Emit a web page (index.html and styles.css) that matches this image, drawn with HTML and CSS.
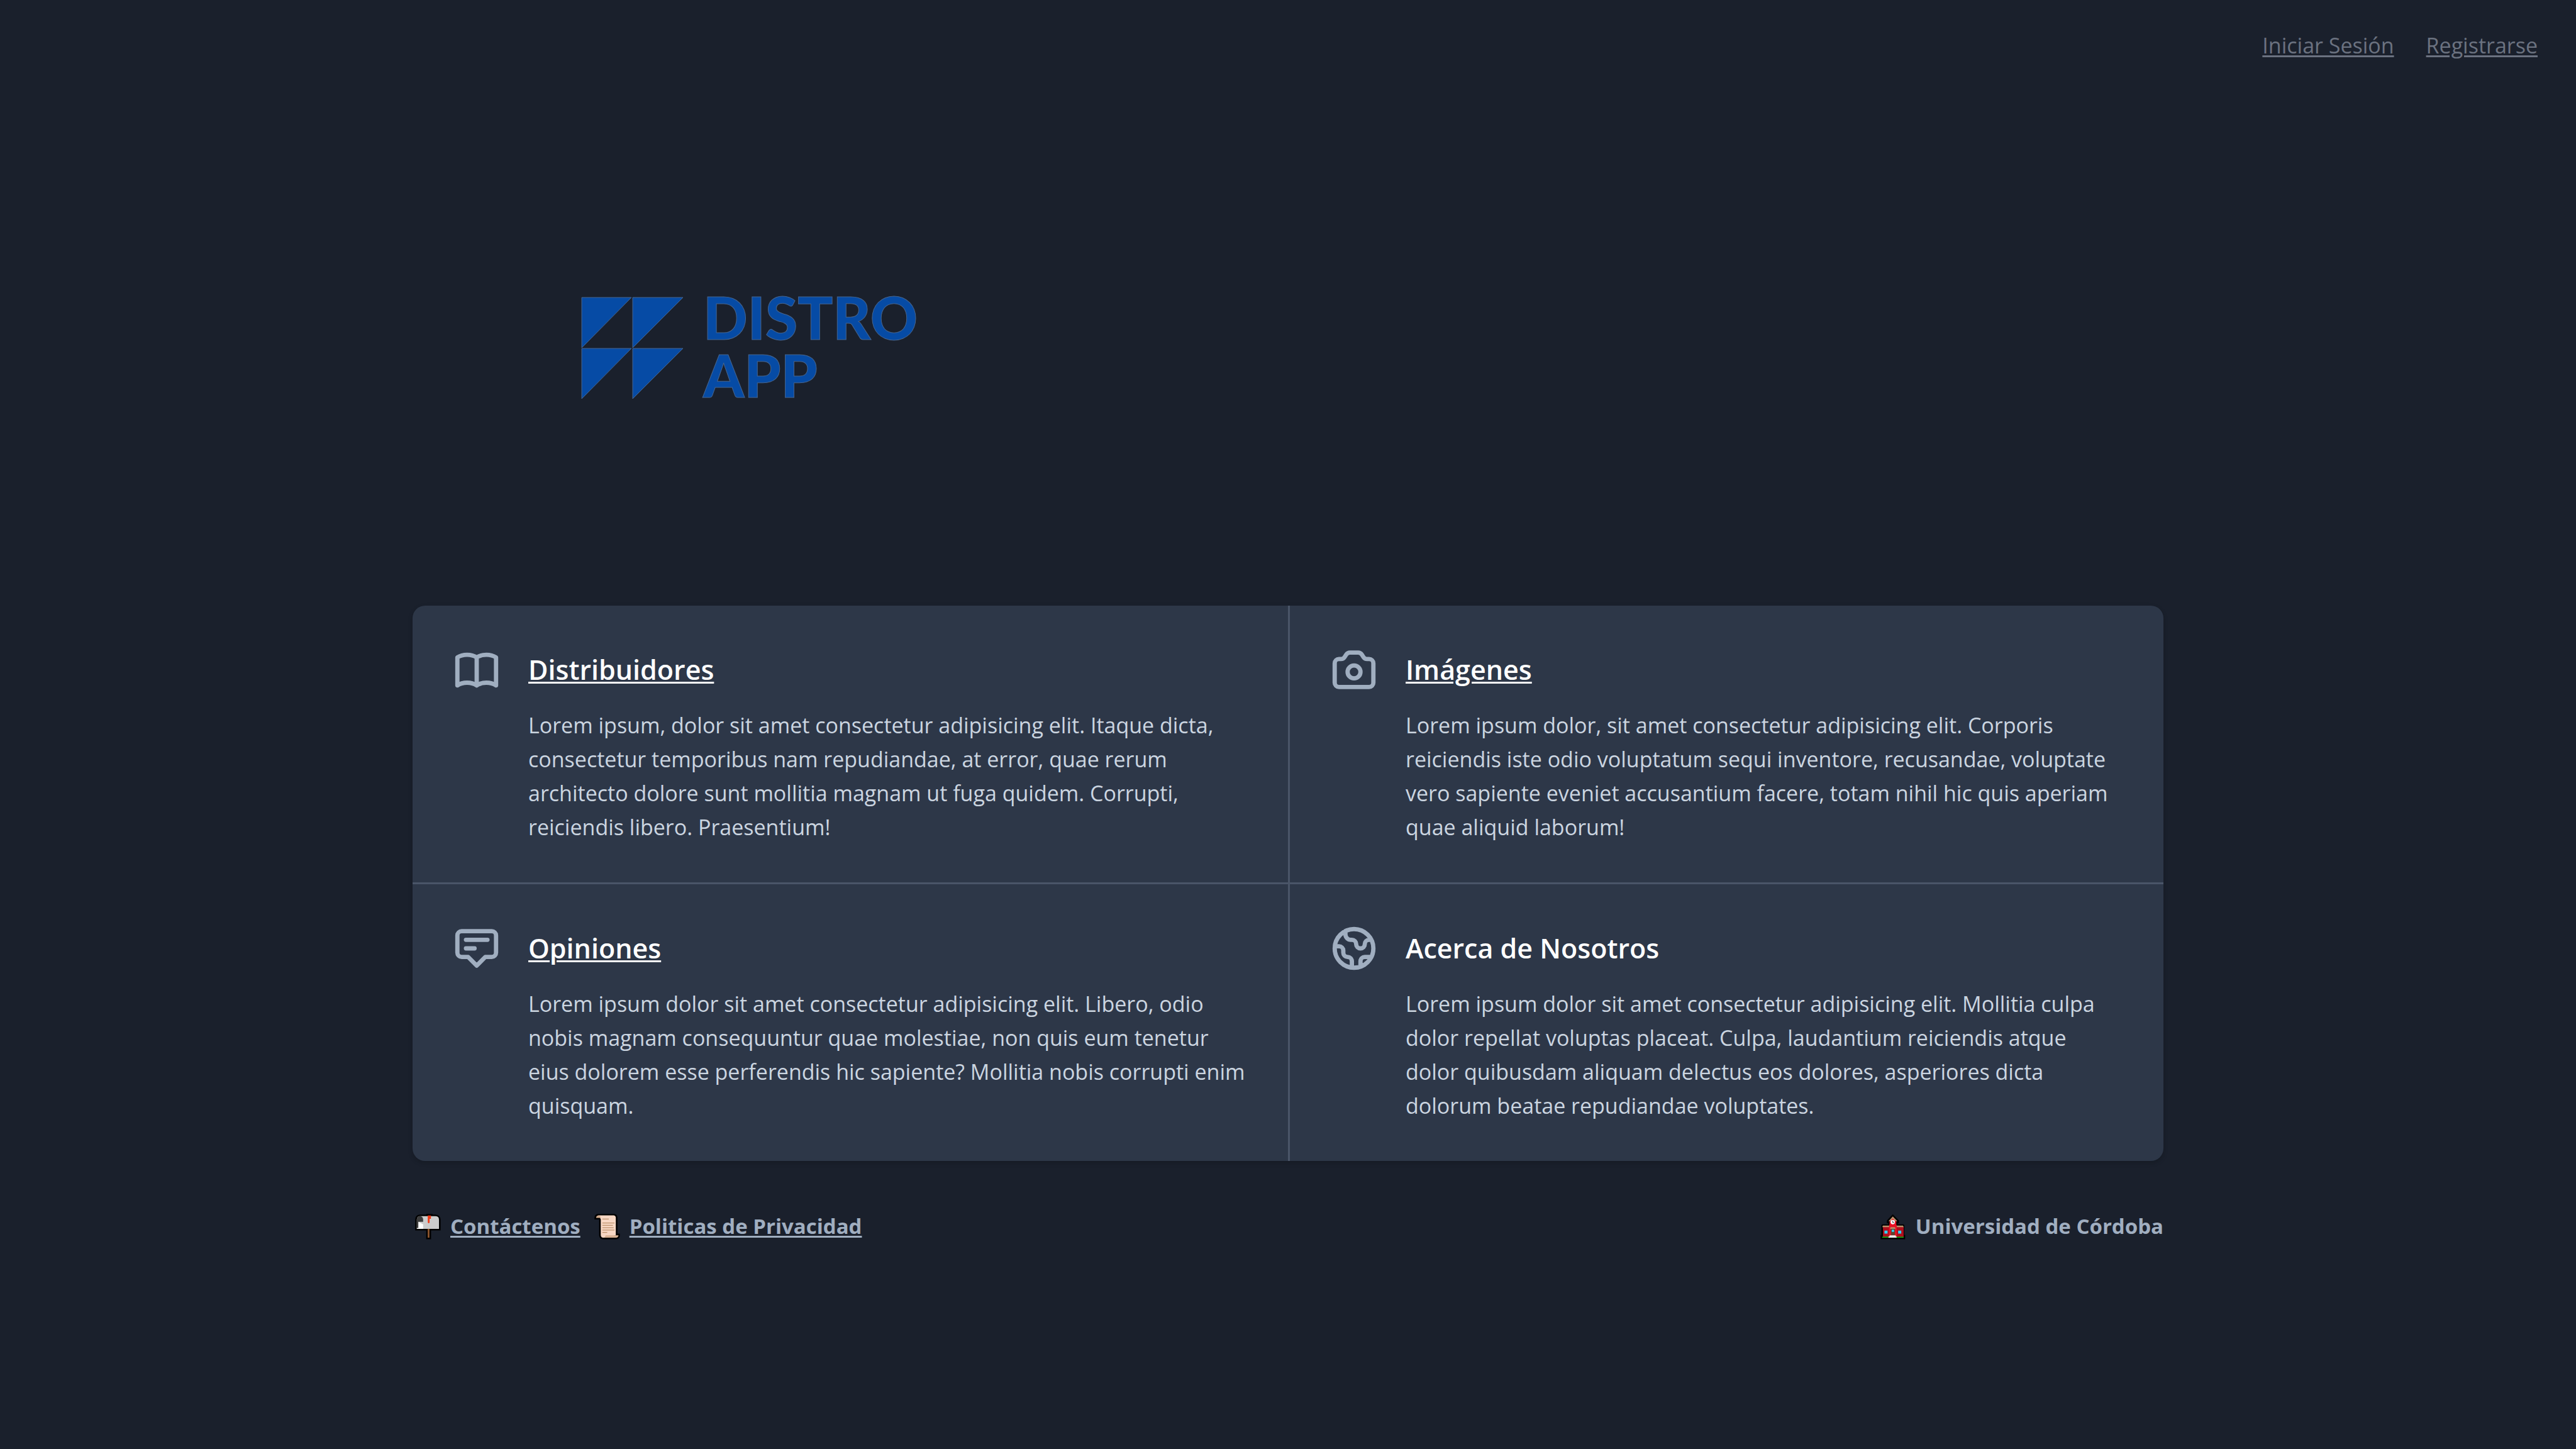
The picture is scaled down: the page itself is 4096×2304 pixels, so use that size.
FILE: index.html
```html
<!DOCTYPE html>
<html lang="es">
<head>
  <meta charset="utf-8">
  <meta name="viewport" content="width=device-width, initial-scale=1">
  <title>Distro App</title>
  <link rel="stylesheet" href="styles.css">
</head>
<body>
  <nav class="topbar">
    <a href="#login">Iniciar Sesión</a>
    <a href="#register">Registrarse</a>
  </nav>

  <main class="container">
    <header class="hero">
      <svg class="logo" viewBox="0 -32 560 228" role="img" aria-label="Distro App">
        <g class="logo-shape">
          <path d="M1 5H80L1 85Z"/>
          <path d="M82 5H162L82 85Z"/>
          <path d="M1 86H80L1 166Z"/>
          <path d="M82 86H162L82 166Z"/>
        </g>
        <g class="logo-text">
          <text x="194" y="72">DISTRO</text>
          <text x="194" y="164">APP</text>
        </g>
      </svg>
    </header>

    <section class="card">
      <article class="cell">
        <svg class="icon" viewBox="0 0 24 24"><path d="M12 6.253v13m0-13C10.832 5.477 9.246 5 7.5 5S4.168 5.477 3 6.253v13C4.168 18.477 5.754 18 7.5 18s3.332.477 4.5 1.253m0-13C13.168 5.477 14.754 5 16.5 5c1.747 0 3.332.477 4.5 1.253v13C19.832 18.477 18.247 18 16.5 18c-1.746 0-3.332.477-4.5 1.253"/></svg>
        <h2 class="title"><a href="#distribuidores">Distribuidores</a></h2>
        <p class="text">Lorem ipsum, dolor sit amet consectetur adipisicing elit. Itaque dicta, consectetur temporibus nam repudiandae, at error, quae rerum architecto dolore sunt mollitia magnam ut fuga quidem. Corrupti, reiciendis libero. Praesentium!</p>
      </article>

      <article class="cell">
        <svg class="icon" viewBox="0 0 24 24"><path d="M3 9a2 2 0 012-2h.93a2 2 0 001.664-.89l.812-1.22A2 2 0 0110.07 4h3.86a2 2 0 011.664.89l.812 1.22A2 2 0 0018.07 7H19a2 2 0 012 2v9a2 2 0 01-2 2H5a2 2 0 01-2-2V9z"/><path d="M15 13a3 3 0 11-6 0 3 3 0 016 0z"/></svg>
        <h2 class="title"><a href="#imagenes">Imágenes</a></h2>
        <p class="text">Lorem ipsum dolor, sit amet consectetur adipisicing elit. Corporis reiciendis iste odio voluptatum sequi inventore, recusandae, voluptate vero sapiente eveniet accusantium facere, totam nihil hic quis aperiam quae aliquid laborum!</p>
      </article>

      <article class="cell">
        <svg class="icon" viewBox="0 0 24 24"><path d="M7 8h10M7 12h4m1 8l-4-4H5a2 2 0 01-2-2V6a2 2 0 012-2h14a2 2 0 012 2v8a2 2 0 01-2 2h-3l-4 4z"/></svg>
        <h2 class="title"><a href="#opiniones">Opiniones</a></h2>
        <p class="text">Lorem ipsum dolor sit amet consectetur adipisicing elit. Libero, odio nobis magnam consequuntur quae molestiae, non quis eum tenetur eius dolorem esse perferendis hic sapiente? Mollitia nobis corrupti enim quisquam.</p>
      </article>

      <article class="cell">
        <svg class="icon" viewBox="0 0 24 24"><path d="M3.055 11H5a2 2 0 012 2v1a2 2 0 002 2 2 2 0 012 2v2.945M8 3.935V5.5A2.5 2.5 0 0010.5 8h.5a2 2 0 012 2 2 2 0 104 0 2 2 0 012-2h1.064M15 20.488V18a2 2 0 012-2h3.064M21 12a9 9 0 11-18 0 9 9 0 0118 0z"/></svg>
        <h2 class="title">Acerca de Nosotros</h2>
        <p class="text">Lorem ipsum dolor sit amet consectetur adipisicing elit. Mollitia culpa dolor repellat voluptas placeat. Culpa, laudantium reiciendis atque<br> dolor quibusdam aliquam delectus eos dolores, asperiores dicta<br> dolorum beatae repudiandae voluptates.</p>
      </article>
    </section>

    <footer class="footer">
      <div class="footer-links">
        <span class="footer-item">
          <svg class="emoji" viewBox="0 0 192 192" aria-hidden="true">
            <path d="M1 124V42Q3 8 34 6H83V1H130V6H152Q186 8 190 42V124H119V190H83V124Z" fill="#000"/>
            <path d="M13 112V42Q15 18 36 18H154Q178 20 178 44V112Z" fill="#ccc"/>
            <path d="M13 106V42Q15 18 37 18Q58 20 60 42V60H25V106Z" fill="#3d3d3d"/>
            <path d="M25 60 60 78V112H13V106H25Z" fill="#fff"/>
            <path d="M94 112H107V178H94Z" fill="#8e562e"/>
            <path d="M94 13H118V37H108V64Q107 70 101 70Q96 70 95 64Z" fill="#f03a17"/>
          </svg>
          <a href="#contacto">Contáctenos</a>
        </span>
        <span class="footer-item">
          <svg class="emoji" viewBox="0 0 192 192" aria-hidden="true">
            <path d="M1 42V28Q3 3 27 1H148Q170 3 172 26V148H190V164Q186 188 162 190H62Q38 186 36 162V42Z" fill="#000"/>
            <path d="M30 12H146Q158 14 160 26V160L80 178H66Q50 176 48 160V40Z" fill="#f7d7c4"/>
            <path d="M13 30Q15 14 30 12Q46 16 48 30Z" fill="#d3ab8c"/>
            <path d="M84 160H180Q178 176 162 178H70Q82 174 84 160Z" fill="#d9b294"/>
            <path d="M60 39H108M60 68H150M60 86H138M60 104H144M60 121H150M60 139H96" stroke="#bd926c" stroke-width="6"/>
          </svg>
          <a href="#privacidad">Politicas de Privacidad</a>
        </span>
      </div>
      <span class="footer-item">
        <svg class="emoji" viewBox="0 0 192 192" aria-hidden="true">
          <path d="M92 4 138 50V70H128V78H172L178 84V158H184V190H1V158H7V84L14 78H58V70H48V50Z" fill="#000"/>
          <path d="M19 98H173V172H19Z" fill="#b00e1c"/>
          <path d="M14 100 18 88H168L174 100Z" fill="#bd926c"/>
          <path d="M92 28 118 54V80L122 88V172H64V88L68 80V54Z" fill="#ea1023"/>
          <path d="M92 20 126 55H112L92 36 74 55H60Z" fill="#bd926c"/>
          <circle cx="92" cy="62" r="16" fill="#fff"/>
          <path d="M92 52V65H102" fill="none" stroke="#555" stroke-width="5"/>
          <path d="M78 110H108V160H78Z" fill="#63402c"/>
          <path d="M76 100H108L113 112H71Z" fill="#b98a66"/>
          <path d="M84 118H102V135H84ZM30 125H53V147H30ZM132 125H155V147H132Z" fill="#31d2f7"/>
          <path d="M13 171H173V178H13Z" fill="#14b814"/>
          <path d="M68 160H114V168H120V178H60V168H68Z" fill="#ececec"/>
        </svg>
        Universidad de Córdoba
      </span>
    </footer>
  </main>
</body>
</html>
```
FILE: styles.css
```css
* {
  box-sizing: border-box;
}

body {
  margin: 0;
  min-height: 100vh;
  background: #1a202c;
  color: #cbd5e0;
  font-family: "Open Sans", "Noto Sans", sans-serif;
  font-size: 34px;
  line-height: 54px;
}

a {
  color: inherit;
  text-decoration: underline;
  text-decoration-thickness: 3px;
  text-underline-offset: 3px;
}

.topbar {
  display: flex;
  justify-content: flex-end;
  gap: 51px;
  padding: 45px 61px 0;
  color: #6b7280;
}

.container {
  max-width: 2784px;
  margin: 0 auto;
}

.hero {
  padding: 337px 268px 299px;
}

.logo {
  display: block;
  width: 560px;
  height: 228px;
}

.logo-shape,
.logo-text {
  fill: #064ba5;
  stroke: #46658f;
  stroke-width: 1px;
}

.logo-text {
  font-family: Lato, sans-serif;
  font-size: 93px;
  font-weight: 900;
}

.card {
  display: grid;
  grid-template-columns: 1fr 1fr;
  overflow: hidden;
  border-radius: 20px;
  background: #2d3748;
  box-shadow: 0 3px 8px rgba(0, 0, 0, 0.1), 0 3px 5px rgba(0, 0, 0, 0.06);
}

.cell {
  display: grid;
  grid-template-columns: 82px 1fr;
  align-items: center;
  column-gap: 41px;
  row-gap: 20px;
  padding: 61px;
}

.cell:nth-child(even) {
  border-left: 3px solid #4a5568;
}

.cell:nth-child(n + 3) {
  border-top: 3px solid #4a5568;
}

.icon {
  width: 82px;
  height: 82px;
  fill: none;
  stroke: #a0aec0;
  stroke-width: 2;
  stroke-linecap: round;
  stroke-linejoin: round;
}

.title {
  margin: 0;
  color: #fff;
  font-size: 43px;
  font-weight: 600;
}

.text {
  grid-column: 2;
  margin: 0;
}

.footer {
  display: flex;
  justify-content: space-between;
  margin-top: 77px;
  padding: 0 0 77px 4px;
  color: #a0aec0;
  font-size: 33px;
  font-weight: 700;
}

.footer-links {
  display: flex;
  gap: 22px;
}

.footer-item {
  display: flex;
  align-items: center;
  gap: 15px;
}

.emoji {
  width: 41px;
  height: 41px;
}
```
